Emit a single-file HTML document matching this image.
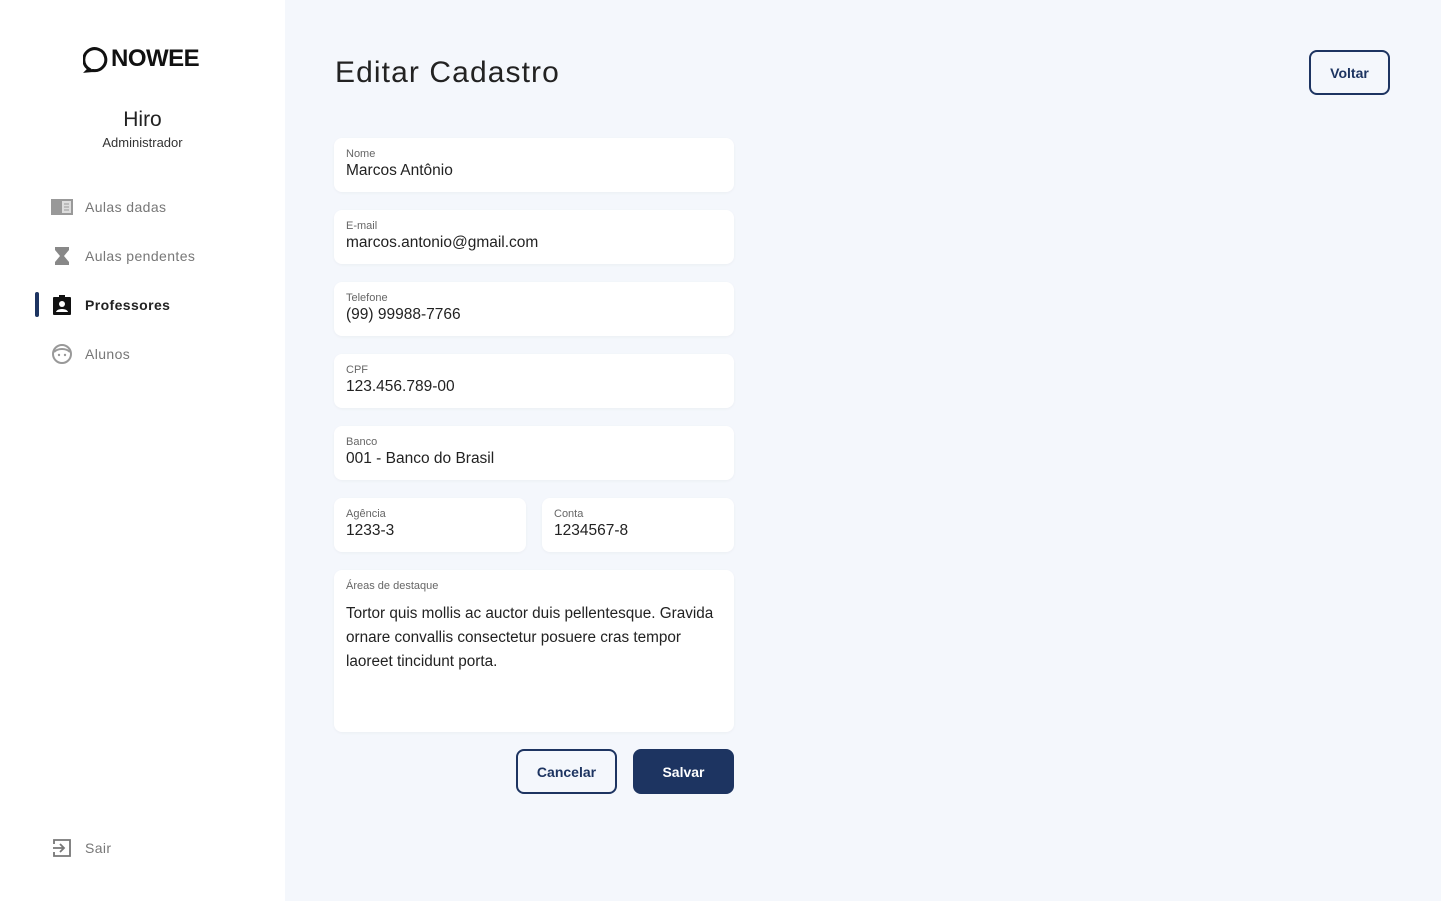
<!DOCTYPE html>
<html><head><meta charset="utf-8"><style>
*{box-sizing:border-box;margin:0;padding:0}
body{width:1441px;height:901px;background:#f4f7fc;font-family:"Liberation Sans",sans-serif;position:relative;overflow:hidden}
.side{position:absolute;left:0;top:0;width:285px;height:901px;background:#fff}
.logo{position:absolute;left:83px;top:45px;font-weight:bold;font-size:24px;color:#111;letter-spacing:-0.5px;display:flex;align-items:center}
.name{position:absolute;left:0;width:285px;text-align:center}
.nav{position:absolute;left:51px;display:flex;align-items:center;font-size:14px;color:#777;letter-spacing:0.4px}
.nav svg{margin-right:12px}
.bar{position:absolute;left:35px;top:292px;width:4px;height:25px;background:#1d3461;border-radius:2px}
h1{position:absolute;left:335px;top:56px;font-weight:normal;font-size:30px;color:#222;letter-spacing:1.1px}
.btn{position:absolute;border:2px solid #1d3461;border-radius:8px;display:flex;align-items:center;justify-content:center;font-size:14px;font-weight:bold;color:#1d3461;background:#f4f7fc}
.f{position:absolute;background:#fff;border-radius:8px;box-shadow:0 1px 3px rgba(0,0,0,0.04)}
.f .l{position:absolute;left:12px;top:10px;font-size:11px;color:#666}
.f .v{position:absolute;left:12px;top:24px;font-size:15.5px;color:#222}
</style></head><body>
<div class="side">
<div class="logo"><svg width="28" height="28" viewBox="0 0 28 28"><path d="M6 24 A11 11 0 1 1 10 25.5 L4 26 Z" fill="none" stroke="#111" stroke-width="3"/></svg>NOWEE</div>
<div class="name" style="top:108px;font-size:21px;color:#222">Hiro</div>
<div class="name" style="top:135px;font-size:13px;color:#333">Administrador</div>
<div class="nav" style="top:198px"><svg width="22" height="18"><rect x="0" y="1" width="22" height="16" fill="#999"/><rect x="11" y="3" width="9" height="12" fill="#ddd"/><path d="M13 6h5M13 9h5M13 12h5" stroke="#999"/></svg>Aulas dadas</div>
<div class="nav" style="top:246px"><svg width="22" height="20"><path d="M4 1h14v3l-5 6 5 6v3H4v-3l5-6-5-6z" fill="#888"/></svg>Aulas pendentes</div>
<div class="bar"></div>
<div class="nav" style="top:295px;color:#222;font-weight:bold"><svg width="22" height="20"><rect x="2" y="2" width="18" height="18" rx="1" fill="#111"/><rect x="8" y="0" width="6" height="4" fill="#111"/><circle cx="11" cy="9" r="3" fill="#fff"/><path d="M5 17c1-4 11-4 12 0z" fill="#fff"/></svg>Professores</div>
<div class="nav" style="top:344px"><svg width="22" height="20"><circle cx="11" cy="10" r="9" fill="none" stroke="#999" stroke-width="2"/><circle cx="8" cy="11" r="1.2" fill="#999"/><circle cx="14" cy="11" r="1.2" fill="#999"/><path d="M3 8c4-4 12-4 16 0" stroke="#999" stroke-width="2" fill="none"/></svg>Alunos</div>
<div class="nav" style="top:838px"><svg width="22" height="20"><path d="M3 6V2h16v16H3v-4M2 10h11M9 6l4 4-4 4" stroke="#777" stroke-width="1.8" fill="none"/></svg>Sair</div>
</div>
<h1>Editar Cadastro</h1>
<div class="btn" style="left:1309px;top:50px;width:81px;height:45px">Voltar</div>
<div class="f" style="left:334px;top:138px;width:400px;height:54px"><div class="l">Nome</div><div class="v">Marcos Antônio</div></div>
<div class="f" style="left:334px;top:210px;width:400px;height:54px"><div class="l">E-mail</div><div class="v">marcos.antonio@gmail.com</div></div>
<div class="f" style="left:334px;top:282px;width:400px;height:54px"><div class="l">Telefone</div><div class="v">(99) 99988-7766</div></div>
<div class="f" style="left:334px;top:354px;width:400px;height:54px"><div class="l">CPF</div><div class="v">123.456.789-00</div></div>
<div class="f" style="left:334px;top:426px;width:400px;height:54px"><div class="l">Banco</div><div class="v">001 - Banco do Brasil</div></div>
<div class="f" style="left:334px;top:498px;width:192px;height:54px"><div class="l">Agência</div><div class="v">1233-3</div></div>
<div class="f" style="left:542px;top:498px;width:192px;height:54px"><div class="l">Conta</div><div class="v">1234567-8</div></div>
<div class="f" style="left:334px;top:570px;width:400px;height:162px"><div class="l">Áreas de destaque</div><div class="v" style="top:32px;line-height:24px;width:385px;font-size:15.3px">Tortor quis mollis ac auctor duis pellentesque. Gravida ornare convallis consectetur posuere cras tempor laoreet tincidunt porta.</div></div>
<div class="btn" style="left:516px;top:749px;width:101px;height:45px">Cancelar</div>
<div class="btn" style="left:633px;top:749px;width:101px;height:45px;background:#1d3461;color:#fff">Salvar</div>
</body></html>
